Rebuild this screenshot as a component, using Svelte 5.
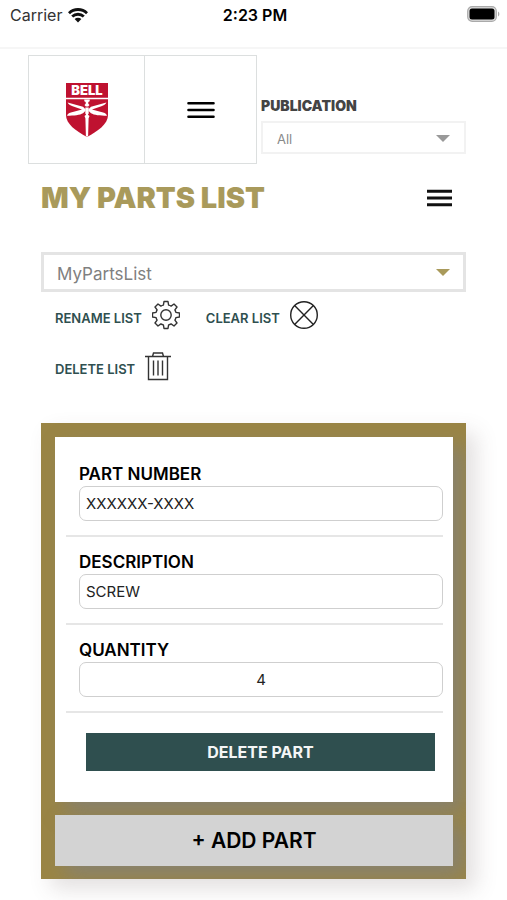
<script lang="ts">
  interface Part { id: number; number: string; description: string; quantity: string; }

  let publications = ['All'];
  let lists = $state(['MyPartsList']);
  let publication = $state('All');
  let currentList = $state('MyPartsList');
  let parts = $state<Part[]>([
    { id: 1, number: 'XXXXXX-XXXX', description: 'SCREW', quantity: '4' },
  ]);
  let nextId = 2;

  function addPart() {
    parts.push({ id: nextId++, number: '', description: '', quantity: '1' });
  }

  function deletePart(id: number) {
    parts = parts.filter(p => p.id !== id);
  }

  function renameList() {
    const name = prompt('New list name', currentList);
    if (!name) return;
    lists = lists.map(l => (l === currentList ? name : l));
    currentList = name;
  }

  function deleteList() {
    lists = lists.filter(l => l !== currentList);
    currentList = lists[0] ?? '';
    parts = [];
  }
</script>

<div class="status-bar">
  <div class="carrier">
    <span>Carrier</span>
    <svg width="20" height="15" viewBox="0 0 20 15" aria-hidden="true">
      <g fill="none" stroke="#111" stroke-width="2.8">
        <path d="M1 5.2a12.8 12.8 0 0 1 18 0" />
        <path d="M4.2 8.6a8.3 8.3 0 0 1 11.6 0" />
      </g>
      <path d="M6.6 11.1a4.9 4.9 0 0 1 6.8 0L10 14.6z" fill="#111" />
    </svg>
  </div>
  <div class="time">2:23 PM</div>
  <svg class="battery" width="33" height="16" viewBox="0 0 33 16" aria-hidden="true">
    <rect x="0.7" y="0.7" width="28.6" height="14.6" rx="4.5" fill="#ddd" stroke="#aaa" stroke-width="1.2" />
    <rect x="2.5" y="2.5" width="25" height="11" rx="2.5" fill="#000" />
    <path d="M31 5.5c1.8.7 1.8 4.3 0 5z" fill="#aaa" />
  </svg>
</div>

<header class="top">
  <div class="tiles">
    <a class="tile logo" href="#home" aria-label="Bell home">
      <svg width="44" height="56" viewBox="0 0 44 56" aria-hidden="true">
        <path d="M1 1h42v32c0 9-10 16-21 22C11 49 1 42 1 33z" fill="#bf1230" />
        <path d="M1 16.5h42" stroke="#fff" stroke-width="1.6" />
        <text x="22" y="13.2" text-anchor="middle" font-family="Inter, sans-serif" font-weight="900" font-size="13" fill="#fff">BELL</text>
        <g fill="#fff">
          <path d="M19.3 17.5h5.4v1.8l-1.4.8v1.6l1.2 1.4-1.3 1.3h-2.4l-1.3-1.3 1.2-1.4v-1.6l-1.4-.8z" />
          <path d="M20.5 27.2 18 24.8 2.6 20.6c.8 2 2.6 3 5 3.6l9.4 3.2-12 3.4c-1.6.6-2.6 1.4-3 3 7-.2 13-.8 16-2.6l2.5-2.4z" />
          <path d="M23.5 27.2 26 24.8l15.4-4.2c-.8 2-2.6 3-5 3.6l-9.4 3.2 12 3.4c1.6.6 2.6 1.4 3 3-7-.2-13-.8-16-2.6l-2.5-2.4z" />
          <path d="M20.3 25.5h3.4v6l-.8 1.3 1.6 1.3-.9 2.2-.5 18.2h-2.2l-.5-18.2-.9-2.2 1.6-1.3-.8-1.3z" />
        </g>
      </svg>
    </a>
    <button class="tile" aria-label="Menu">
      <svg width="28" height="18" viewBox="0 0 28 18" aria-hidden="true">
        <path d="M1.5 2.2h25M1.5 9h25M1.5 15.8h25" stroke="#000" stroke-width="2.6" stroke-linecap="round" />
      </svg>
    </button>
  </div>
  <div class="publication">
    <label for="publication">PUBLICATION</label>
    <div class="select-wrap small">
      <select id="publication" bind:value={publication}>
        {#each publications as p}
          <option>{p}</option>
        {/each}
      </select>
    </div>
  </div>
</header>

<main>
  <div class="title-row">
    <h1>MY PARTS LIST</h1>
    <button class="icon-btn" aria-label="List menu">
      <svg width="25" height="18" viewBox="0 0 25 18" aria-hidden="true">
        <path d="M0 2.3h25M0 9h25M0 15.7h25" stroke="#111" stroke-width="3" />
      </svg>
    </button>
  </div>

  <div class="select-wrap">
    <select aria-label="Parts list" bind:value={currentList}>
      {#each lists as l}
        <option>{l}</option>
      {/each}
    </select>
  </div>

  <div class="actions">
    <button class="action" onclick={renameList}>
      <span>RENAME LIST</span>
      <svg width="28" height="30" viewBox="1 0 28 30" fill="none" stroke="#333" stroke-width="1.4" stroke-linejoin="round" aria-hidden="true">
        <circle cx="15" cy="15" r="5.2" />
        <path d="M13 1.5h4l.6 3.6q1.300.3 2.5 1l2.900-2.100 3 3-2.100 2.900q.7 1.200 1 2.500l3.600.6v4l-3.600.6q-.3 1.300-1 2.500l2.100 2.900-3 3-2.900-2.100q-1.200.7-2.500 1l-.6 3.600h-4l-.6-3.600q-1.300-.3-2.500-1l-2.900 2.100-3-3 2.100-2.900q-.7-1.200-1-2.500l-3.600-.6v-4l3.600-.6q.3-1.300 1-2.500l-2.100-2.900 3-3 2.900 2.100q1.200-.7 2.500-1z" />
      </svg>
    </button>
    <button class="action" onclick={() => (parts = [])}>
      <span>CLEAR LIST</span>
      <svg width="28" height="30" viewBox="1 0 28 30" fill="none" stroke="#222" stroke-width="1.4" aria-hidden="true">
        <circle cx="15" cy="15" r="13.3" />
        <path d="M5.6 5.6l18.8 18.8M24.4 5.6L5.6 24.4" />
      </svg>
    </button>
    <button class="action" onclick={deleteList}>
      <span>DELETE LIST</span>
      <svg width="26" height="30" viewBox="0 0 26 30" fill="none" stroke="#333" stroke-width="1.4" aria-hidden="true">
        <path d="M0 5.5h26M7.5 5.5l1-3.5h9l1 3.5M3.5 5.5v23h19v-23M8.5 9.5v15M13 9.5v15M17.5 9.5v15" />
      </svg>
    </button>
  </div>

  <section class="card">
    {#each parts as part (part.id)}
      <div class="part">
        <div class="field">
          <label for="number-{part.id}">PART NUMBER</label>
          <input id="number-{part.id}" type="text" bind:value={part.number} />
        </div>
        <div class="field">
          <label for="description-{part.id}">DESCRIPTION</label>
          <input id="description-{part.id}" type="text" bind:value={part.description} />
        </div>
        <div class="field">
          <label for="quantity-{part.id}">QUANTITY</label>
          <input id="quantity-{part.id}" class="quantity" type="text" inputmode="numeric" bind:value={part.quantity} />
        </div>
        <button class="btn-delete" onclick={() => deletePart(part.id)}>DELETE PART</button>
      </div>
    {/each}
    <button class="btn-add" onclick={addPart}>+ ADD PART</button>
  </section>
</main>

<style>
  :global(body) { background: #fff; font-family: Inter, "Liberation Sans", sans-serif; color: #000; }
  button, input, select { font-family: inherit; box-sizing: border-box; margin: 0; }
  button { background: none; border: 0; padding: 0; cursor: pointer; color: inherit; }
  svg { display: block; flex-shrink: 0; }

  .status-bar {
    display: grid; grid-template-columns: 1fr auto 1fr; align-items: start;
    height: 49px; padding: 6px 7px 0 10px; box-sizing: border-box;
    border-bottom: 2px solid #f6f6f6; line-height: 18px;
  }
  .carrier { display: flex; align-items: center; gap: 6px; font-size: 16px; color: #333; }
  .time { font-size: 16px; font-weight: 600; }
  .battery { justify-self: end; }

  .top { display: flex; gap: 4px; padding: 6px 41px 0 28px; }
  .tiles { display: flex; border: 1px solid #dcdfdf; }
  .tile {
    display: flex; align-items: center; justify-content: center;
    width: 111px; height: 107px;
  }
  .logo { width: 115px; border-right: 1px solid #dcdfdf; }

  .publication { flex: 1; min-width: 0; padding-top: 43px; }
  .publication label {
    display: block; font-size: 14px; line-height: 16px; font-weight: 900;
    color: #444; margin-bottom: 7px;
  }

  .select-wrap { position: relative; color: #a99a5b; }
  .select-wrap select {
    display: block; width: 100%; height: 40px; padding: 3px 36px 0 13px;
    appearance: none; background: #fff; border: 3px solid #e4e4e4; border-radius: 0;
    font-size: 17px; color: #808080;
  }
  .select-wrap::after {
    content: ''; position: absolute; right: 16px; top: 50%; margin-top: -3px;
    border: 7px solid transparent; border-top-color: currentColor; border-bottom: 0;
    pointer-events: none;
  }
  .select-wrap.small { color: #999; }
  .small select { height: 33px; padding-left: 14px; border: 2px solid #f2f2f2; font-size: 13px; color: #8a8a8a; }

  main { padding: 0 41px 21px; }
  .title-row {
    display: flex; align-items: center; justify-content: space-between;
    padding: 16px 14px 36px 0;
  }
  h1 { margin: 0; font-size: 29px; line-height: 36px; font-weight: 900; color: #a99a5b; }

  .actions { display: flex; flex-wrap: wrap; column-gap: 26px; row-gap: 21px; padding: 8px 14px 42px; }
  .action { display: flex; align-items: center; gap: 10px; }
  .action span {
    font-size: 13px; line-height: 18px; font-weight: 600;
    color: #2f4f4f; padding-top: 6px;
  }

  .card {
    display: flex; flex-direction: column; gap: 13px; padding: 14px 13px 13px 14px;
    background: #9a8545; box-shadow: 10px 10px 20px rgba(90, 70, 70, 0.17);
    overflow: hidden;
  }
  .part {
    display: flex; flex-direction: column; padding: 25px 10px 31px 11px;
    background: #fff; box-shadow: 10px 10px 20px rgba(128, 128, 128, 0.7);
  }
  .field {
    display: flex; flex-direction: column; padding-left: 13px; padding-bottom: 14px;
    margin-bottom: 13px; border-bottom: 2px solid #e6e6e6;
  }
  .field label { font-size: 17px; line-height: 24px; font-weight: 600; }
  .field input {
    width: 100%; height: 35px; padding: 0 6px; font-size: 15px; color: #222;
    border: 1px solid #cfcfcf; border-radius: 7px; background: #fff;
  }
  .field input.quantity { text-align: center; }

  .btn-delete {
    height: 38px; margin: 7px 8px 0 20px; background: #2f4f4f;
    color: #f4f6f6; font-size: 16px; font-weight: 700;
  }
  .btn-add {
    height: 51px; background: #d3d3d3; font-size: 21px; font-weight: 600;
    box-shadow: 10px 10px 20px rgba(128, 128, 128, 0.7);
  }
</style>
